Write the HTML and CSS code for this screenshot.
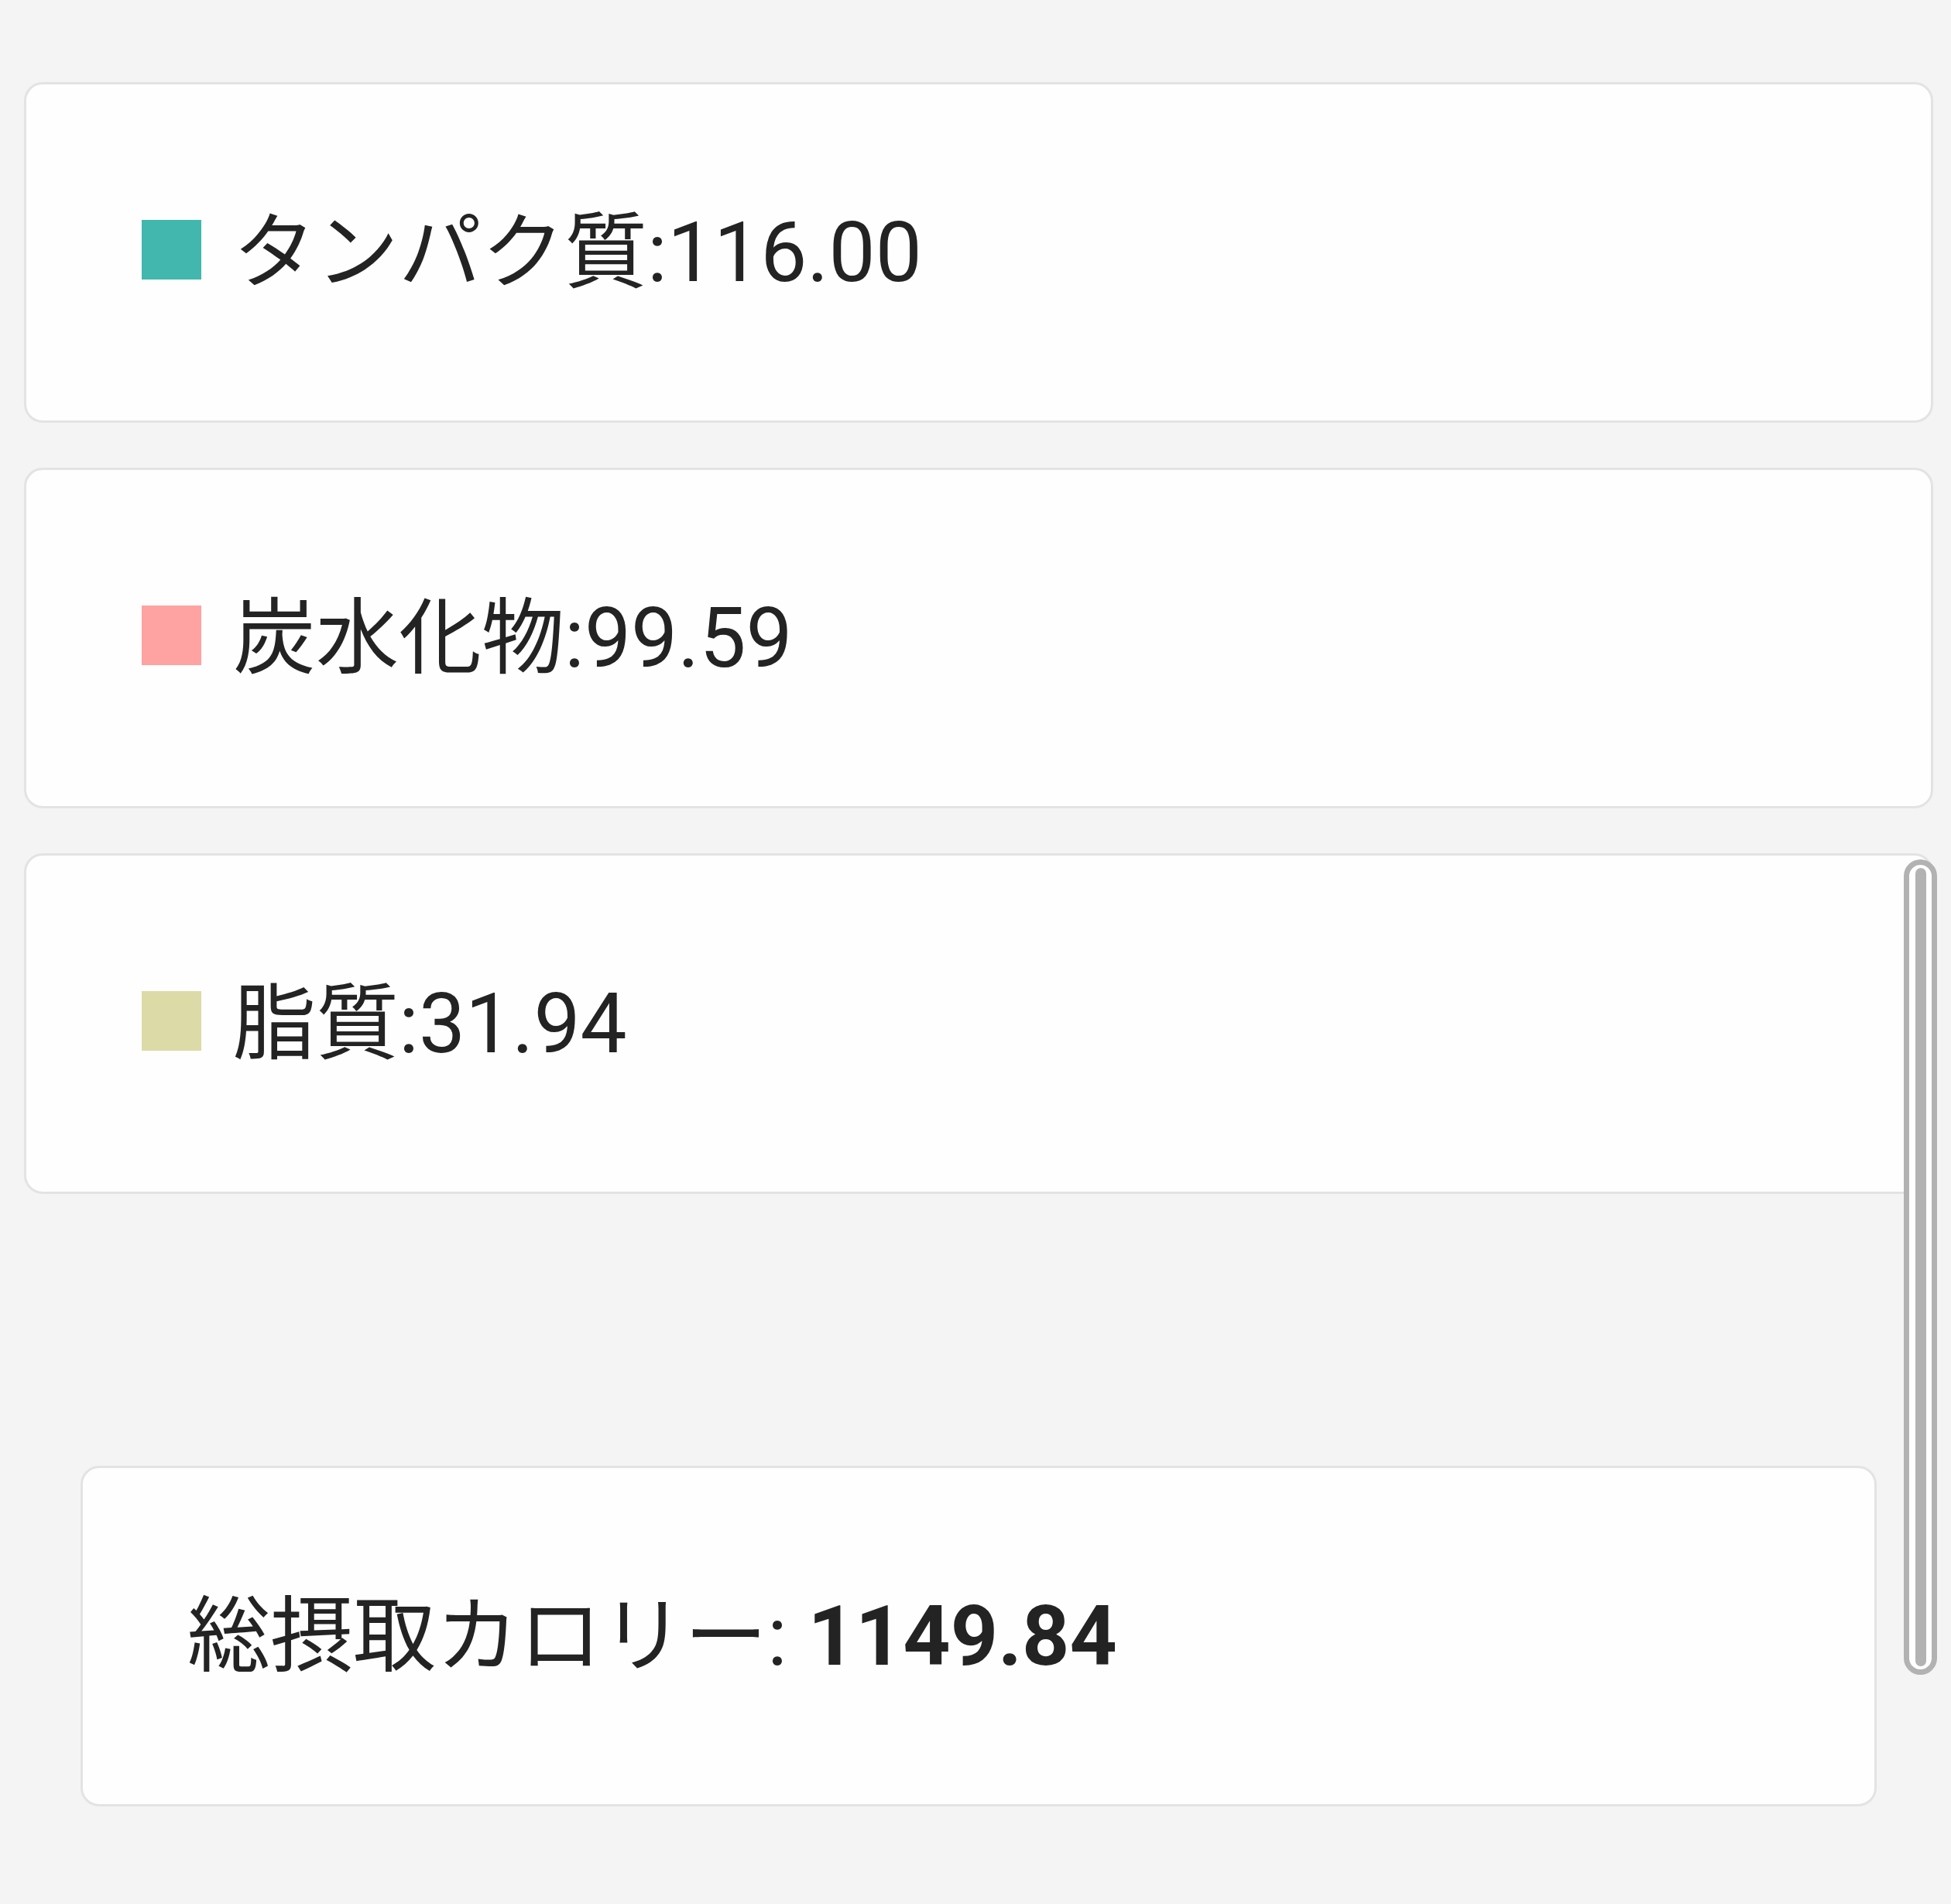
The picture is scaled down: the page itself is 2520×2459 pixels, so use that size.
FILE: index.html
```html
<!DOCTYPE html>
<html lang="ja">
<head>
<meta charset="utf-8">
<title>栄養素</title>
<link rel="stylesheet" href="styles.css">
</head>
<body>
<div class="page">
  <div class="list">
    <div class="card">
      <span class="swatch swatch-protein"></span>
      <span class="label">タンパク質:116.00</span>
    </div>
    <div class="card">
      <span class="swatch swatch-carb"></span>
      <span class="label">炭水化物:99.59</span>
    </div>
    <div class="card">
      <span class="swatch swatch-fat"></span>
      <span class="label">脂質:31.94</span>
    </div>
  </div>
  <div class="total-wrap">
    <div class="card total">
      <span class="label">総摂取カロリー: <b class="num">1149.84</b></span>
    </div>
  </div>
  <div class="scrollbar"><div class="thumb"></div></div>
</div>
</body>
</html>
```

FILE: styles.css
```css
html, body {
  margin: 0;
  padding: 0;
  background: #f4f4f4;
}

body {
  font-family: Roboto, "Noto Sans CJK JP", "Noto Sans", sans-serif;
  color: #232323;
}

.page {
  position: relative;
  width: 2520px;
  height: 2459px;
  box-sizing: border-box;
  padding: 106px 0 0 31px;
}

.list {
  display: flex;
  flex-direction: column;
  gap: 58px;
  width: 2466px;
}

.card {
  box-sizing: border-box;
  height: 440px;
  background: #fefefe;
  border: 3px solid #e3e3e3;
  border-radius: 24px;
  display: flex;
  align-items: center;
  padding-left: 149px;
}

.swatch {
  width: 77px;
  height: 77px;
  flex: none;
  margin-right: 41px;
  margin-bottom: 8px;
}

.swatch-protein { background: #42b7ad; }
.swatch-carb { background: #ffa2a1; }
.swatch-fat { background: #dcdba8; }

.label {
  font-size: 107px;
  line-height: 1;
  white-space: nowrap;
}

.num {
  font-weight: 700;
}

.total-wrap {
  width: 2466px;
  padding: 351px 73px 0;
  box-sizing: border-box;
}

.total {
  height: 440px;
  padding-left: 135px;
}

.scrollbar {
  position: absolute;
  left: 2459px;
  top: 1110px;
  width: 43px;
  height: 1053px;
  box-sizing: border-box;
  border: 7px solid #b2b2b2;
  border-radius: 22px;
  background: #ffffff;
  display: flex;
  justify-content: center;
  padding: 4px 0;
}

.thumb {
  width: 14px;
  height: 100%;
  background: #b3b3b3;
  border-radius: 7px;
}
```
